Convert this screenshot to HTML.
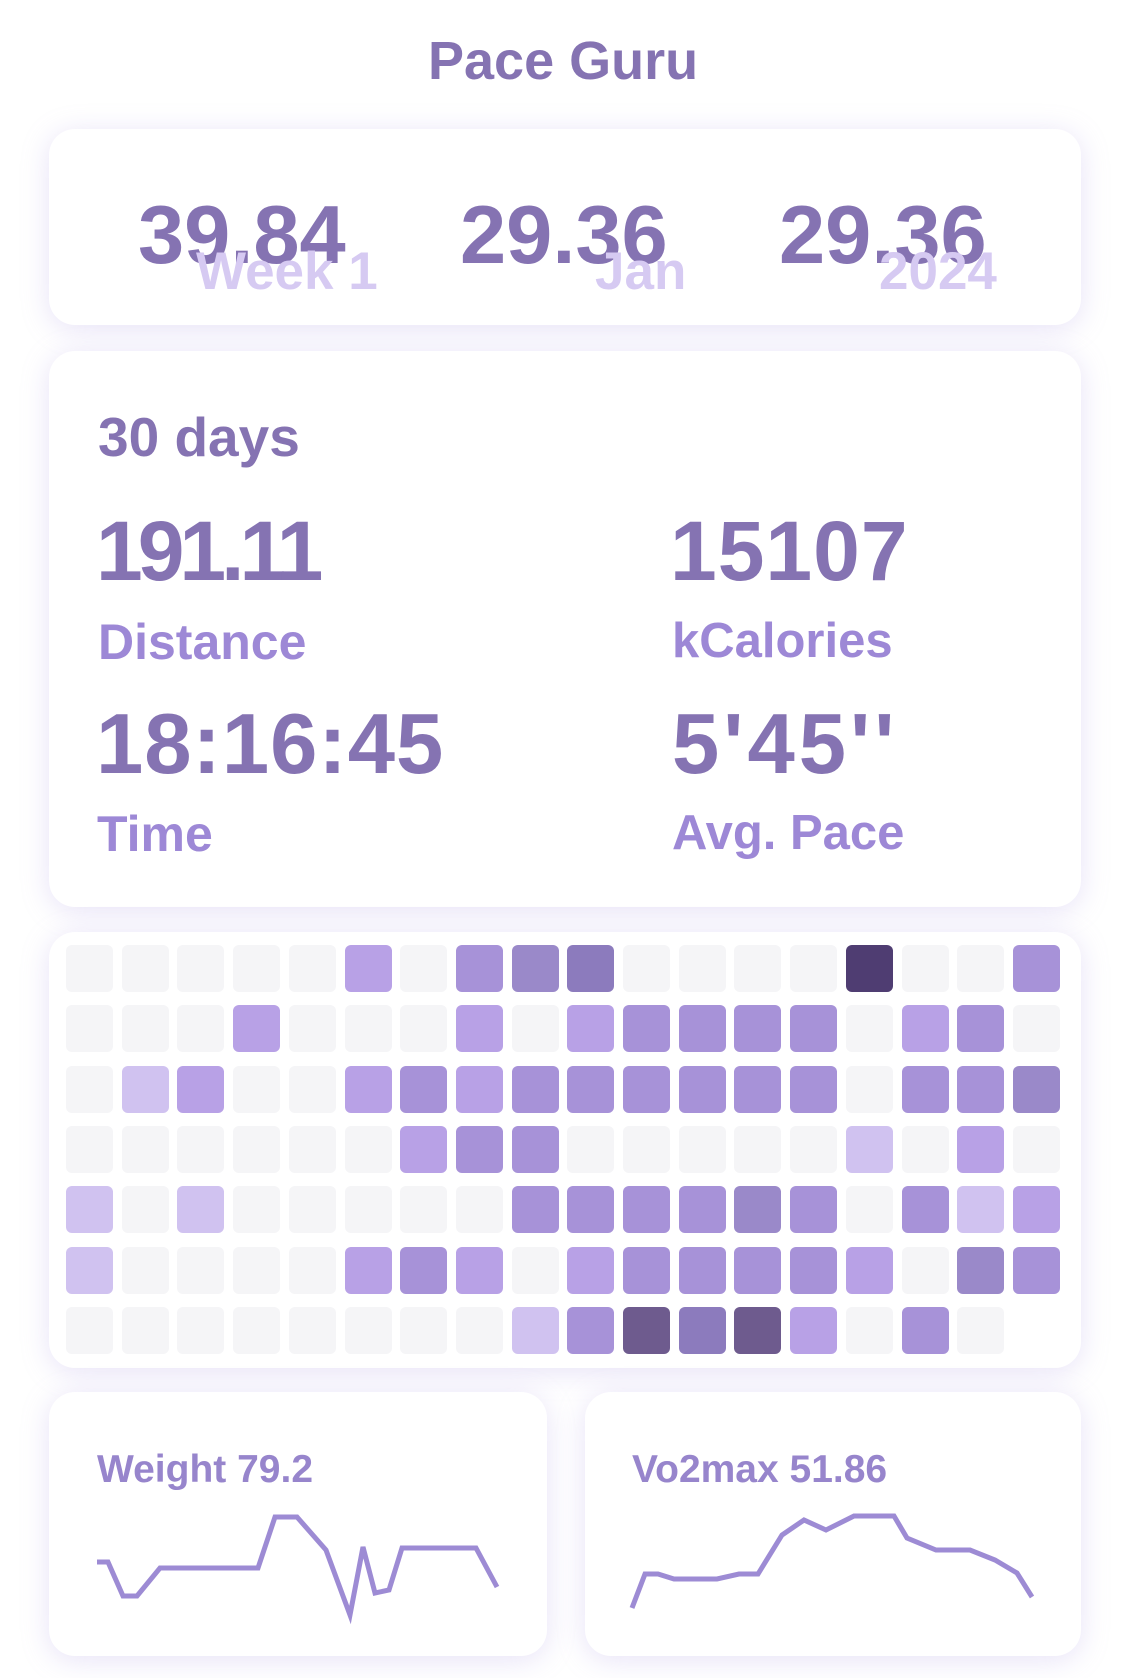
<!DOCTYPE html>
<html><head><meta charset="utf-8"><style>
*{margin:0;padding:0;box-sizing:border-box}
body{width:1125px;height:1678px;background:#fff;font-family:"Liberation Sans",sans-serif;position:relative;overflow:hidden;font-weight:bold}
.card{position:absolute;background:#fff;border-radius:26px;box-shadow:0 4px 28px rgba(170,150,225,0.28)}
.t{position:absolute;white-space:nowrap;line-height:1}
.n{color:#8573b2}
.l{color:#9d88d6}
.w{color:#d6caf2}
.cell{position:absolute;width:47px;height:47px;border-radius:6px}
</style></head><body>
<div class="t n" style="left:428px;top:34px;font-size:54px">Pace Guru</div>

<div class="card" style="left:49px;top:129px;width:1032px;height:196px"></div>
<div class="t n" style="left:138px;top:193px;font-size:83px">39.84</div>
<div class="t w" style="left:196px;top:245px;font-size:53px">Week 1</div>
<div class="t n" style="left:460px;top:193px;font-size:83px">29.36</div>
<div class="t w" style="left:595px;top:245px;font-size:53px">Jan</div>
<div class="t n" style="left:779px;top:193px;font-size:83px">29.36</div>
<div class="t w" style="left:879px;top:245px;font-size:53px">2024</div>

<div class="card" style="left:49px;top:351px;width:1032px;height:556px"></div>
<div class="t n" style="left:98px;top:410px;font-size:55px">30 days</div>
<div class="t n" style="left:96px;top:509px;font-size:84px;letter-spacing:-5px">191.11</div>
<div class="t l" style="left:98px;top:617px;font-size:50px">Distance</div>
<div class="t n" style="left:670px;top:509px;font-size:84px;letter-spacing:1px">15107</div>
<div class="t l" style="left:672px;top:617px;font-size:49px">kCalories</div>
<div class="t n" style="left:96px;top:702px;font-size:85px;letter-spacing:1px">18:16:45</div>
<div class="t l" style="left:97px;top:809px;font-size:50px">Time</div>
<div class="t n" style="left:672px;top:702px;font-size:85px;letter-spacing:4px">5'45''</div>
<div class="t l" style="left:672px;top:809px;font-size:49px">Avg. Pace</div>

<div class="card" style="left:49px;top:932px;width:1032px;height:436px"></div>
<div id="grid"></div>

<div class="card" style="left:49px;top:1392px;width:498px;height:264px"></div>
<div class="card" style="left:585px;top:1392px;width:496px;height:264px"></div>
<div class="t" style="left:97px;top:1450px;font-size:39px;color:#9785cc">Weight 79.2</div>
<div class="t" style="left:632px;top:1450px;font-size:39px;color:#9785cc">Vo2max 51.86</div>
<svg style="position:absolute;left:0;top:0" width="1125" height="1678">
<polyline fill="none" stroke="#9d8bd4" stroke-width="5" points="97,1562 108,1562 123,1596 137,1596 160,1568 258,1568 275,1517 297,1517 326,1550 350,1615 363,1547 375,1593 389,1590 402,1548 476,1548 497,1587"/>
<polyline fill="none" stroke="#9d8bd4" stroke-width="5" points="632,1608 645,1574 658,1574 674,1579 717,1579 739,1574 758,1574 782,1535 804,1520 826,1530 854,1516 894,1516 907,1538 936,1550 970,1550 995,1560 1017,1573 1032,1597"/>
</svg>
<script>
var rows=[
"000002034500007003",
"000200020233330230",
"012002323333330334",
"000000233000001020",
"101000003333430312",
"100002320233332043",
"00000000136562030x"];
var col=["#f5f5f7","#d0c2f0","#b8a1e6","#a792d8","#9a89c9","#8c7bbd","#6e5b8e","#4f3d72"];
var h="";
for(var r=0;r<7;r++)for(var c=0;c<18;c++){var v=rows[r][c];if(v==="x")continue;
h+='<div class="cell" style="left:'+(66+c*55.7).toFixed(1)+'px;top:'+(945+r*60.3).toFixed(1)+'px;background:'+col[+v]+'"></div>';}
document.getElementById("grid").innerHTML=h;
</script>
</body></html>
